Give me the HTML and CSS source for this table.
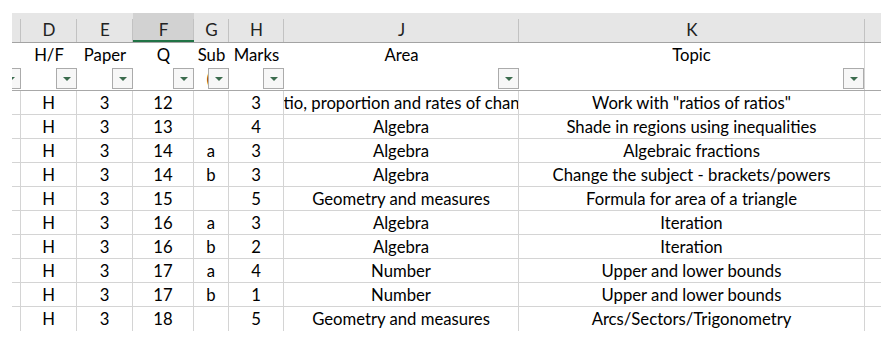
FILE: index.html
```html
<!DOCTYPE html>
<html lang="en">
<head>
	<meta charset="UTF-8">
	<title>Paper 3 - Higher</title>
	<link rel="stylesheet" href="styles.css">
</head>
<body>
	<div class="sheet">
		<div class="row head">
			<div class="col"></div>
			<div class="col">D</div>
			<div class="col">E</div>
			<div class="col active">F</div>
			<div class="col">G</div>
			<div class="col">H</div>
			<div class="col">J</div>
			<div class="col">K</div>
			<div class="col last"></div>
		</div>
		<div class="row filters">
			<div class="fcell edge"><div class="fbar"><span class="drop"></span></div></div>
			<div class="fcell"><div class="label">H/F</div><div class="fbar"><span class="drop"></span></div></div>
			<div class="fcell"><div class="label">Paper</div><div class="fbar"><span class="drop"></span></div></div>
			<div class="fcell"><div class="label">Q</div><div class="fbar"><span class="drop"></span></div></div>
			<div class="fcell"><div class="label">Sub</div><div class="fbar"><span class="stub">(</span><span class="drop"></span></div></div>
			<div class="fcell"><div class="label">Marks</div><div class="fbar"><span class="drop"></span></div></div>
			<div class="fcell"><div class="label">Area</div><div class="fbar"><span class="drop"></span></div></div>
			<div class="fcell lined"><div class="label">Topic</div><div class="fbar"><span class="drop"></span></div></div>
			<div class="fcell"></div>
		</div>
		<div id="rows"></div>
	</div>
	<script>
		const questions = [
			['H', '3', '12', '', '3', 'Ratio, proportion and rates of change', 'Work with "ratios of ratios"'],
			['H', '3', '13', '', '4', 'Algebra', 'Shade in regions using inequalities'],
			['H', '3', '14', 'a', '3', 'Algebra', 'Algebraic fractions'],
			['H', '3', '14', 'b', '3', 'Algebra', 'Change the subject - brackets/powers'],
			['H', '3', '15', '', '5', 'Geometry and measures', 'Formula for area of a triangle'],
			['H', '3', '16', 'a', '3', 'Algebra', 'Iteration'],
			['H', '3', '16', 'b', '2', 'Algebra', 'Iteration'],
			['H', '3', '17', 'a', '4', 'Number', 'Upper and lower bounds'],
			['H', '3', '17', 'b', '1', 'Number', 'Upper and lower bounds'],
			['H', '3', '18', '', '5', 'Geometry and measures', 'Arcs/Sectors/Trigonometry']
		];

		const rowsBox = document.getElementById('rows');

		questions.forEach(q => {
			const row = document.createElement('div');
			row.className = 'row data';
			// blank cells either side of the visible columns
			[''].concat(q, ['']).forEach((value, i, all) => {
				const cell = document.createElement('div');
				cell.className = i === all.length - 1 ? 'cell last' : 'cell';
				const text = document.createElement('span');
				text.textContent = value;
				cell.appendChild(text);
				row.appendChild(cell);
			});
			rowsBox.appendChild(row);
		});
	</script>
</body>
</html>
```

FILE: styles.css
```css
body {
	margin: 0;
	padding: 13px 0 0 12px;
	background-color: #fff;
	font-family: "Lato", "Open Sans", sans-serif;
	color: #000;
}
.sheet {
	width: 869px;
}
.row {
	display: grid;
	grid-template-columns: 9px 56px 56px 61px 35px 55px 235px 346px 16px;
}
.head {
	height: 30px;
	box-sizing: border-box;
	border-bottom: 1px solid #a3a3a3;
	background-color: #e6e6e6;
}
.col {
	display: flex;
	justify-content: center;
	align-items: center;
	padding-top: 3px;
	font-size: 17px;
	color: #222;
	background: linear-gradient(#c2c2c2, #c2c2c2) right bottom / 1px 23px no-repeat, #e6e6e6;
}
.col.active {
	background: linear-gradient(#c2c2c2, #c2c2c2) right bottom / 1px 23px no-repeat, #d2d2d2;
	box-shadow: inset 0 -2px 0 #217346;
}
.col.last {
	background: #e6e6e6;
}
.filters {
	height: 48px;
	box-sizing: border-box;
	border-bottom: 1px solid #a8a8a8;
}
.fcell {
	display: flex;
	flex-direction: column;
	justify-content: space-between;
	overflow: hidden;
	font-size: 16.7px;
}
.fcell.lined {
	border-right: 1px solid #d4d4d4;
}
.label {
	padding-top: 2px;
	line-height: 20px;
	text-align: center;
	white-space: nowrap;
}
.fbar {
	display: flex;
	justify-content: flex-end;
	align-items: center;
	margin-bottom: 1px;
}
.fcell.edge {
	justify-content: flex-end;
}
.stub {
	margin-right: -3px;
	line-height: 20px;
	color: #5a2a00;
}
.drop {
	flex: none;
	width: 21px;
	height: 21px;
	box-sizing: border-box;
	border: 1px solid #ababab;
	background-color: #f7f7f7;
	display: flex;
	justify-content: center;
	align-items: center;
}
.drop::after {
	content: "";
	border-left: 4px solid transparent;
	border-right: 4px solid transparent;
	border-top: 4px solid #3b6b4d;
	margin-top: 1px;
}
.data {
	height: 24px;
}
.cell {
	display: flex;
	justify-content: center;
	align-items: center;
	box-sizing: border-box;
	border-right: 1px solid #d4d4d4;
	border-bottom: 1px solid #d4d4d4;
	overflow: hidden;
	white-space: nowrap;
	font-size: 16.7px;
}
.cell span {
	flex: none;
}
.cell.last {
	border-right: none;
}
#rows .data:last-child .cell {
	border-bottom: none;
}
```
